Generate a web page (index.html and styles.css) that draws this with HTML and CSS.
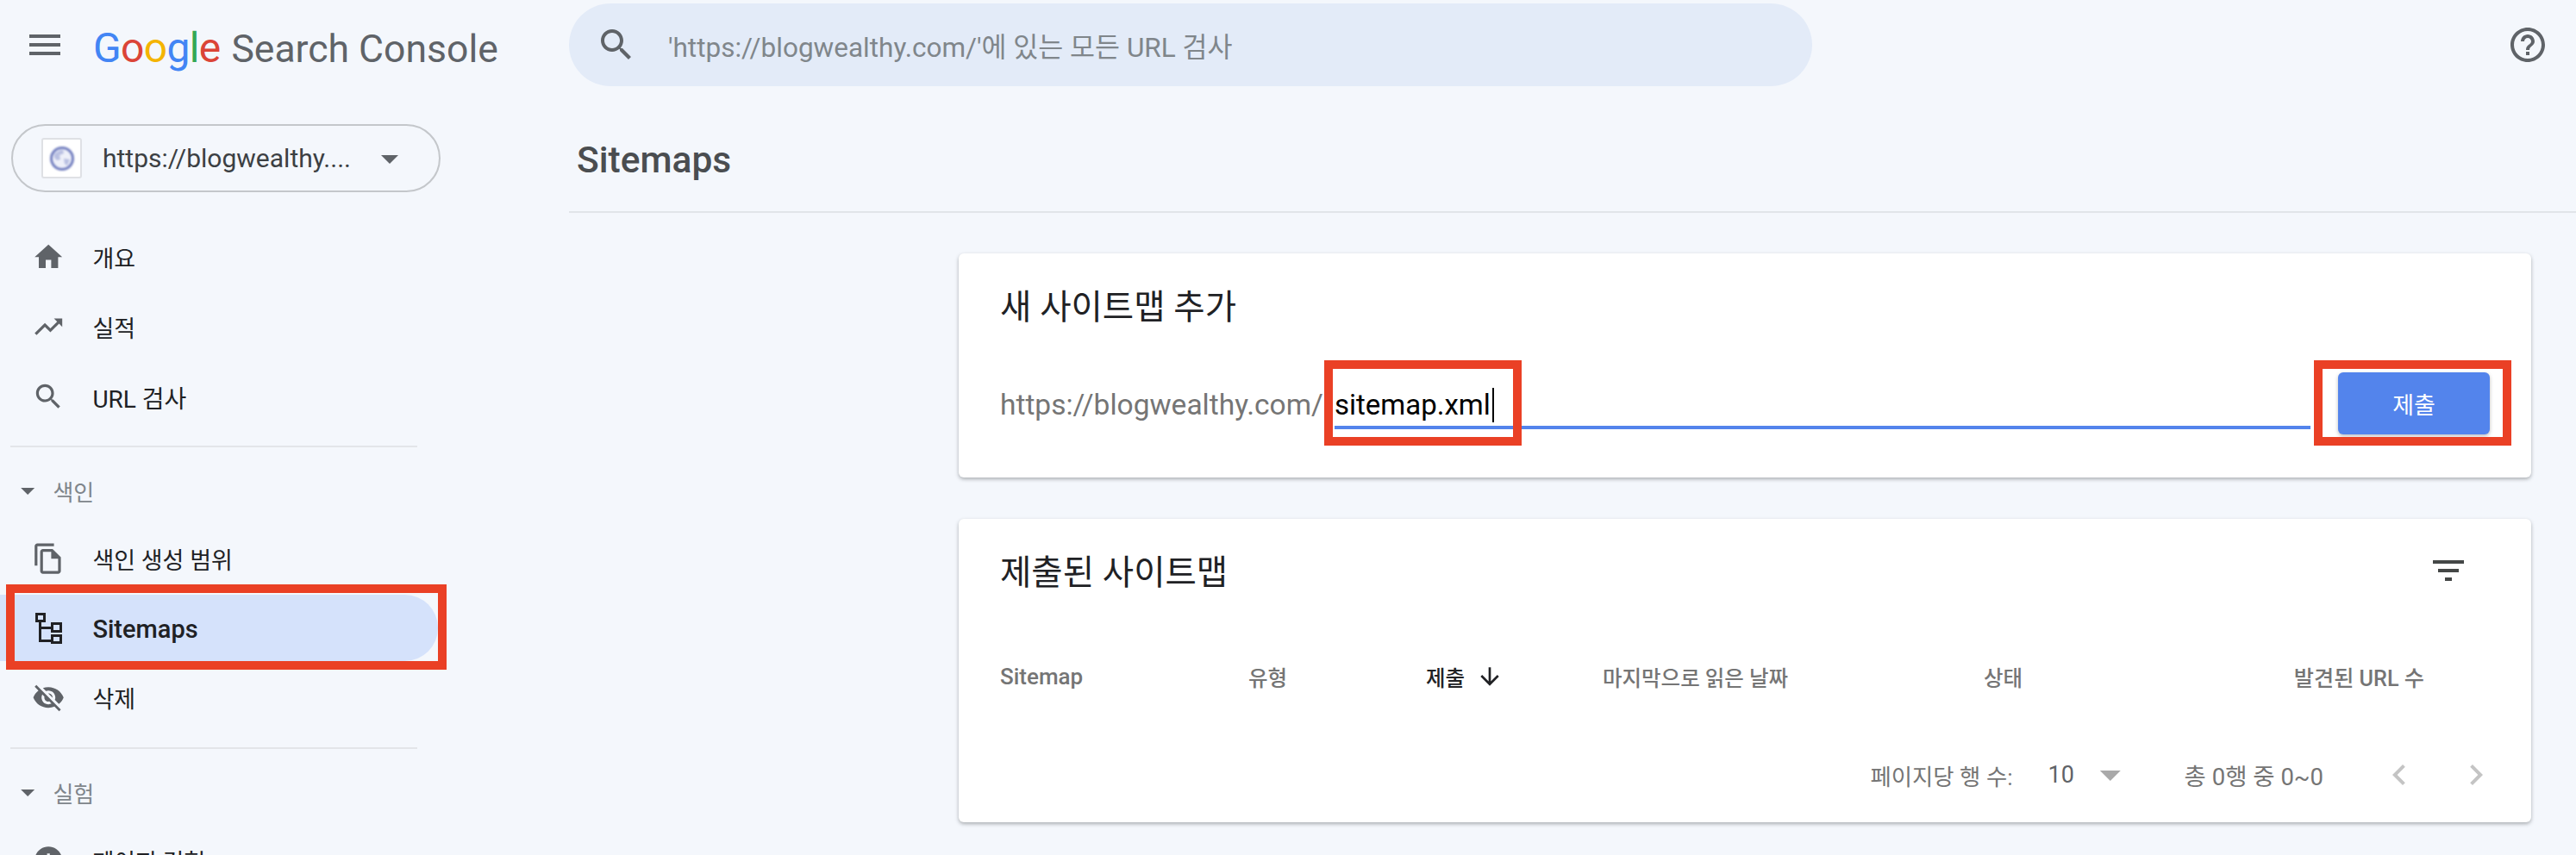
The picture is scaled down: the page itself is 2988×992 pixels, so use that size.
FILE: index.html
```html
<!DOCTYPE html>
<html lang="ko">
<head>
    <meta charset="UTF-8">
    <title>Sitemaps - Google Search Console</title>
    <link rel="stylesheet" href="styles.css">
</head>
<body>
    <header class="topbar">
        <svg class="icon-menu" viewBox="0 0 24 24"><path d="M3 18h18v-2H3v2zm0-5h18v-2H3v2zm0-7v2h18V6H3z"/></svg>
        <div class="logo">
            <span class="logo-google"><span class="c-blue">G</span><span class="c-red">o</span><span class="c-yellow">o</span><span class="c-blue">g</span><span class="c-green">l</span><span class="c-red">e</span></span>
            <span class="logo-name">Search Console</span>
        </div>
        <div class="search">
            <svg class="icon-search" viewBox="0 0 24 24"><path d="M15.5 14h-.79l-.28-.27C15.41 12.59 16 11.11 16 9.5 16 5.91 13.09 3 9.5 3S3 5.91 3 9.5 5.91 16 9.5 16c1.61 0 3.09-.59 4.23-1.57l.27.28v.79l5 4.99L20.49 19l-4.99-5zm-6 0C7.01 14 5 11.99 5 9.5S7.01 5 9.5 5 14 7.01 14 9.5 11.99 14 9.5 14z"/></svg>
            <span class="search-text">'https://blogwealthy.com/'에 있는 모든 URL 검사</span>
        </div>
        <svg class="icon-help" viewBox="0 0 24 24"><path d="M11 18h2v-2h-2v2zm1-16C6.48 2 2 6.48 2 12s4.48 10 10 10 10-4.48 10-10S17.52 2 12 2zm0 18c-4.41 0-8-3.59-8-8s3.59-8 8-8 8 3.59 8 8-3.59 8-8 8zm0-14c-2.21 0-4 1.79-4 4h2c0-1.1.9-2 2-2s2 .9 2 2c0 2-3 1.75-3 5h2c0-2.25 3-2.5 3-5 0-2.21-1.79-4-4-4z"/></svg>
    </header>

    <div class="layout">
        <aside class="sidebar">
            <div class="property">
                <div class="favicon">
                    <svg viewBox="0 0 30 30"><circle cx="15" cy="15" r="12.5" fill="#eef0f9" stroke="#7480c0" stroke-width="3"/><path d="M6 10c3-3 6-5 10-5l1 4-5 2 1 5-4 1-3-3zM17 15l7 1-3 7-3-2z" fill="#b9c0e2"/></svg>
                </div>
                <span class="property-url">https://blogwealthy....</span>
                <svg class="icon-drop" viewBox="0 0 24 24"><path d="M7 10l5 5 5-5z"/></svg>
            </div>

            <nav class="nav">
                <a class="nav-item">
                    <svg class="nav-icon" viewBox="0 0 24 24"><path d="M10 20v-6h4v6h5v-8h3L12 3 2 12h3v8z"/></svg>
                    <span>개요</span>
                </a>
                <a class="nav-item">
                    <svg class="nav-icon" viewBox="0 0 24 24"><path d="M16 6l2.29 2.29-4.88 4.88-4-4L2 16.59 3.41 18l6-6 4 4 6.3-6.29L22 12V6z"/></svg>
                    <span>실적</span>
                </a>
                <a class="nav-item">
                    <svg class="nav-icon" viewBox="0 0 24 24"><path d="M15.5 14h-.79l-.28-.27C15.41 12.59 16 11.11 16 9.5 16 5.91 13.09 3 9.5 3S3 5.91 3 9.5 5.91 16 9.5 16c1.61 0 3.09-.59 4.23-1.57l.27.28v.79l5 4.99L20.49 19l-4.99-5zm-6 0C7.01 14 5 11.99 5 9.5S7.01 5 9.5 5 14 7.01 14 9.5 11.99 14 9.5 14z"/></svg>
                    <span class="latin">URL 검사</span>
                </a>

                <div class="nav-divider"></div>
                <div class="nav-section">
                    <svg class="section-drop" viewBox="0 0 24 24"><path d="M7 10l5 5 5-5z"/></svg>
                    <span>색인</span>
                </div>
                <a class="nav-item">
                    <svg class="nav-icon" viewBox="0 0 24 24"><path d="M16 1H4c-1.1 0-2 .9-2 2v14h2V3h12V1zm-1 4H8c-1.1 0-1.99.9-1.99 2L6 21c0 1.1.89 2 1.99 2H19c1.1 0 2-.9 2-2V11l-6-6zM8 21V7h6v5h5v9H8z"/></svg>
                    <span>색인 생성 범위</span>
                </a>
                <a class="nav-item active">
                    <svg class="nav-icon" viewBox="0 0 32 36" fill="none" stroke="#202124" stroke-width="3">
                        <rect x="2.5" y="1.5" width="9" height="8"/>
                        <rect x="20.5" y="12.5" width="10" height="9"/>
                        <rect x="20.5" y="26.5" width="10" height="8"/>
                        <path d="M6.5 10v22.5h14M6.5 17.5h14"/>
                    </svg>
                    <span class="latin">Sitemaps</span>
                    <div class="mark mark-nav"></div>
                </a>
                <a class="nav-item">
                    <svg class="nav-icon" viewBox="0 0 24 24"><path d="M12 7c2.76 0 5 2.24 5 5 0 .65-.13 1.26-.36 1.83l2.92 2.92c1.51-1.26 2.7-2.89 3.43-4.75-1.73-4.39-6-7.5-11-7.5-1.4 0-2.74.25-3.98.7l2.16 2.16C10.74 7.13 11.35 7 12 7zM2 4.27l2.28 2.28.46.46C3.08 8.3 1.78 10.02 1 12c1.73 4.39 6 7.5 11 7.5 1.55 0 3.03-.3 4.38-.84l.42.42L19.73 22 21 20.73 3.27 3 2 4.27zM7.53 9.8l1.55 1.55c-.05.21-.08.43-.08.65 0 1.66 1.34 3 3 3 .22 0 .44-.03.65-.08l1.55 1.55c-.67.33-1.41.53-2.2.53-2.76 0-5-2.24-5-5 0-.79.2-1.53.53-2.2zm4.31-.78l3.15 3.15.02-.16c0-1.66-1.34-3-3-3l-.17.01z"/></svg>
                    <span>삭제</span>
                </a>

                <div class="nav-divider divider-second"></div>
                <div class="nav-section">
                    <svg class="section-drop" viewBox="0 0 24 24"><path d="M7 10l5 5 5-5z"/></svg>
                    <span>실험</span>
                </div>
                <a class="nav-item">
                    <svg class="nav-icon" viewBox="0 0 24 24"><path d="M12 2C6.48 2 2 6.48 2 12s4.48 10 10 10 10-4.48 10-10S17.52 2 12 2zm1 15h-2v-6h2v6zm0-8h-2V7h2v2z"/></svg>
                    <span>페이지 경험</span>
                </a>
            </nav>
        </aside>

        <main class="content">
            <div class="page-head">
                <h1>Sitemaps</h1>
            </div>

            <section class="card card-add">
                <h2>새 사이트맵 추가</h2>
                <div class="add-row">
                    <span class="prefix">https://blogwealthy.com/</span>
                    <div class="sitemap-input">
                        <span class="input-text">sitemap.xml</span><span class="input-caret"></span>
                        <div class="mark mark-input"></div>
                    </div>
                    <div class="submit">
                        <button type="button">제출</button>
                        <div class="mark mark-submit"></div>
                    </div>
                </div>
            </section>

            <section class="card card-list">
                <div class="list-head">
                    <h2>제출된 사이트맵</h2>
                    <svg class="icon-filter" viewBox="0 0 24 24"><path d="M10 18h4v-2h-4v2zM3 6v2h18V6H3zm3 7h12v-2H6v2z"/></svg>
                </div>
                <div class="table-head">
                    <span class="col-latin">Sitemap</span>
                    <span>유형</span>
                    <span class="sorted">제출
                        <svg class="icon-sort" viewBox="0 0 24 24"><path d="M20 12l-1.41-1.41L13 16.17V4h-2v12.17l-5.58-5.59L4 12l8 8 8-8z"/></svg>
                    </span>
                    <span>마지막으로 읽은 날짜</span>
                    <span>상태</span>
                    <span class="col-end">발견된 URL 수</span>
                </div>
                <div class="pager">
                    <span>페이지당 행 수:</span>
                    <span class="page-size">10</span>
                    <svg class="pager-drop" viewBox="0 0 24 24"><path d="M7 10l5 5 5-5z"/></svg>
                    <span class="page-count">총 0행 중 0~0</span>
                    <svg class="pager-prev" viewBox="0 0 24 24"><path d="M15.41 7.41L14 6l-6 6 6 6 1.41-1.41L10.83 12z"/></svg>
                    <svg class="pager-next" viewBox="0 0 24 24"><path d="M10 6L8.59 7.41 13.17 12l-4.58 4.58L10 18l6-6z"/></svg>
                </div>
            </section>
        </main>
    </div>
</body>
</html>
```

FILE: styles.css
```css
:root {
    --bg: #f4f7fc;
    --blue: #5384ec;
    --mark: #ea4025;
    --icon: #5f6368;
    --text: #202124;
    --text-light: #757575;
    --line: #e3e5e9;
}

* {
    margin: 0;
    padding: 0;
    box-sizing: border-box;
}

html, body {
    height: 992px;
    overflow: hidden;
}

body {
    font-family: Roboto, "Noto Sans CJK KR", sans-serif;
    background-color: var(--bg);
    color: var(--text);
}

svg {
    display: block;
    flex: none;
    fill: var(--icon);
}

/* Top bar */
.topbar {
    display: flex;
    align-items: flex-start;
    height: 104px;
    padding-top: 4px;
}

.icon-menu {
    width: 48px;
    height: 48px;
    margin: 24px 0 0 28px;
}

.logo {
    display: flex;
    align-items: baseline;
    width: 552px;
    margin: 23px 0 0 32px;
    line-height: 58px;
}

.logo-google {
    font-size: 48px;
    letter-spacing: -0.7px;
}

.logo-name {
    margin-left: 13px;
    font-size: 44.5px;
    color: var(--icon);
}

.c-blue { color: #4285f4; }
.c-red { color: #db4437; }
.c-yellow { color: #f4b400; }
.c-green { color: #34a853; }

.search {
    display: flex;
    align-items: center;
    width: 1442px;
    height: 96px;
    padding-left: 31px;
    background: #e3ebf8;
    border-radius: 48px;
}

.icon-search {
    width: 48px;
    height: 48px;
}

.search-text {
    margin-left: 36px;
    font-size: 31.5px;
    color: #80868b;
}

.icon-help {
    width: 48px;
    height: 48px;
    margin: 24px 0 0 806px;
}

/* Sidebar */
.layout {
    display: grid;
    grid-template-columns: 660px 1fr;
}

.property {
    display: flex;
    align-items: center;
    width: 498px;
    height: 79px;
    margin: 40px 0 0 13px;
    padding-left: 33px;
    border: 2px solid #c4c7cb;
    border-radius: 40px;
}

.favicon {
    display: flex;
    align-items: center;
    justify-content: center;
    width: 47px;
    height: 47px;
    background: white;
    border: 2px solid #dfe1e5;
    border-radius: 3px;
}

.favicon svg {
    width: 30px;
    height: 30px;
    filter: blur(0.8px);
}

.property-url {
    margin-left: 24px;
    font-size: 30px;
    color: #3c4043;
    white-space: nowrap;
}

.icon-drop {
    width: 48px;
    height: 48px;
    margin-left: 21px;
}

.nav {
    margin-top: 35px;
}

.nav-item {
    position: relative;
    display: flex;
    align-items: center;
    height: 81px;
    padding-left: 37px;
    font-size: 27px;
    color: var(--text);
}

.nav-item span {
    margin-left: 32px;
    white-space: nowrap;
}

.nav-item .latin {
    font-size: 28px;
}

.nav-icon {
    width: 38.4px;
    height: 38.4px;
}

.nav-item.active {
    width: 508px;
    height: 77px;
    margin: 1px 0 2px;
    background: #d5e2fb;
    border-radius: 0 39px 39px 0;
}

.active .nav-icon {
    width: 32px;
    height: 36px;
    margin: 0 3.4px 0 3px;
    fill: none;
}

.active .latin {
    padding-top: 2px;
    font-size: 29px;
    font-weight: 500;
}

.nav-divider {
    width: 472px;
    height: 2px;
    margin: 16px 0 0 12px;
    background: var(--line);
}

.divider-second {
    margin-top: 17px;
}

.nav-section {
    display: flex;
    align-items: center;
    height: 46px;
    margin: 27px 0 16px;
    padding-left: 13px;
    font-size: 26px;
    color: #80868b;
}

.nav-section span {
    margin-left: 10px;
}

.section-drop {
    width: 38.4px;
    height: 38.4px;
}

/* Cards */
.page-head {
    display: flex;
    align-items: center;
    height: 143px;
    padding: 22px 0 0 9px;
    border-bottom: 2px solid #e1e5e9;
}

h1 {
    font-size: 42.5px;
    font-weight: 500;
    color: #4a4d50;
}

.card {
    width: 1824px;
    margin-left: 452px;
    padding: 0 48px;
    background: white;
    border-radius: 6px;
    box-shadow: 0 2px 4px rgba(60, 64, 67, 0.4);
}

h2 {
    font-size: 39.5px;
    font-weight: 400;
    line-height: 46px;
}

.card-add {
    height: 260px;
    margin-top: 47px;
    padding-top: 40px;
}

.add-row {
    display: flex;
    align-items: flex-start;
    margin-top: 52px;
}

.prefix {
    width: 388px;
    font-size: 33.5px;
    line-height: 76px;
    color: var(--text-light);
    white-space: nowrap;
}

.sitemap-input {
    position: relative;
    display: flex;
    flex: 1;
    height: 66px;
    border-bottom: 4px solid var(--blue);
}

.input-text {
    font-size: 33px;
    line-height: 76px;
    color: black;
}

.input-caret {
    width: 2px;
    height: 40px;
    margin: 18px 0 0 2px;
    background: black;
}

.submit {
    position: relative;
    margin-left: 32px;
}

button {
    display: block;
    width: 176px;
    height: 72px;
    font-family: inherit;
    font-size: 27px;
    color: white;
    background: var(--blue);
    border: none;
    border-radius: 6px;
    box-shadow: 0 2px 4px rgba(60, 64, 67, 0.35);
}

/* Red annotation frames drawn over the page */
.mark {
    position: absolute;
    border: 10px solid var(--mark);
}

.mark-nav {
    top: -12px;
    left: 7px;
    right: -10px;
    bottom: -10px;
}

.mark-input {
    top: -14px;
    left: -12px;
    width: 229px;
    height: 99px;
}

.mark-submit {
    top: -14px;
    left: -28px;
    right: -25px;
    bottom: -13px;
}

/* Sitemap table */
.card-list {
    height: 352px;
    margin-top: 48px;
    padding-top: 36px;
}

.list-head {
    display: flex;
    align-items: center;
    justify-content: space-between;
    height: 48px;
    padding-right: 24px;
}

.list-head h2 {
    padding-top: 6px;
}

.icon-filter {
    width: 48px;
    height: 48px;
    fill: #444746;
}

.table-head {
    display: grid;
    grid-template-columns: 288px 206px 205px 442px 1fr auto;
    align-items: center;
    height: 54px;
    margin-top: 72px;
    padding-right: 76px;
    font-size: 24.5px;
    font-weight: 500;
    color: var(--text-light);
}

.col-latin {
    font-size: 26px;
}

.col-end {
    font-size: 25.2px;
}

.sorted {
    display: flex;
    align-items: center;
    color: var(--text);
}

.icon-sort {
    width: 32px;
    height: 32px;
    margin-left: 13px;
    fill: var(--text);
}

.pager {
    display: flex;
    align-items: center;
    justify-content: flex-end;
    height: 48px;
    margin-top: 63px;
    margin-right: -8px;
    font-size: 26.4px;
    color: var(--text-light);
}

.page-size {
    margin-left: 41px;
    font-size: 27px;
    color: #5f6368;
}

.pager-drop {
    width: 57.6px;
    height: 57.6px;
    margin-left: 13px;
    fill: #a9a9a9;
}

.page-count {
    margin-left: 57px;
    font-size: 27.5px;
}

.pager-prev,
.pager-next {
    width: 48px;
    height: 48px;
    fill: #c4c4c4;
}

.pager-prev {
    margin-left: 64px;
}

.pager-next {
    margin-left: 41px;
}
```
